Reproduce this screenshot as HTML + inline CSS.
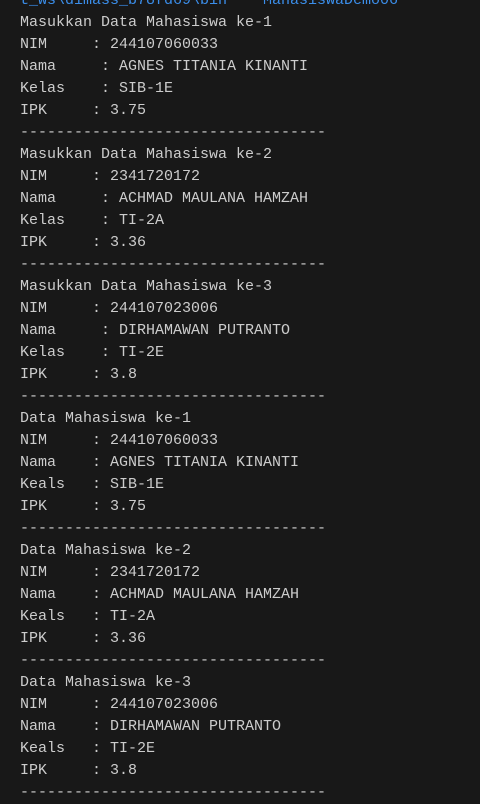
<!DOCTYPE html>
<html><head><meta charset="utf-8"><style>
html,body{margin:0;padding:0;background:#181818;width:480px;height:795px;overflow:hidden}
pre{position:absolute;left:20px;top:-10px;margin:0;font-family:"Liberation Mono",monospace;font-size:15px;line-height:22px;color:#cccccc;white-space:pre}
.b{color:#3b8eea}
</style></head><body><pre><span class="b">t_ws\dimass_b78fd69\bin'  'MahasiswaDemo06'</span>
Masukkan Data Mahasiswa ke-1
NIM     : 244107060033
Nama     : AGNES TITANIA KINANTI
Kelas    : SIB-1E
IPK     : 3.75
----------------------------------
Masukkan Data Mahasiswa ke-2
NIM     : 2341720172
Nama     : ACHMAD MAULANA HAMZAH
Kelas    : TI-2A
IPK     : 3.36
----------------------------------
Masukkan Data Mahasiswa ke-3
NIM     : 244107023006
Nama     : DIRHAMAWAN PUTRANTO
Kelas    : TI-2E
IPK     : 3.8
----------------------------------
Data Mahasiswa ke-1
NIM     : 244107060033
Nama    : AGNES TITANIA KINANTI
Keals   : SIB-1E
IPK     : 3.75
----------------------------------
Data Mahasiswa ke-2
NIM     : 2341720172
Nama    : ACHMAD MAULANA HAMZAH
Keals   : TI-2A
IPK     : 3.36
----------------------------------
Data Mahasiswa ke-3
NIM     : 244107023006
Nama    : DIRHAMAWAN PUTRANTO
Keals   : TI-2E
IPK     : 3.8
----------------------------------</pre></body></html>
